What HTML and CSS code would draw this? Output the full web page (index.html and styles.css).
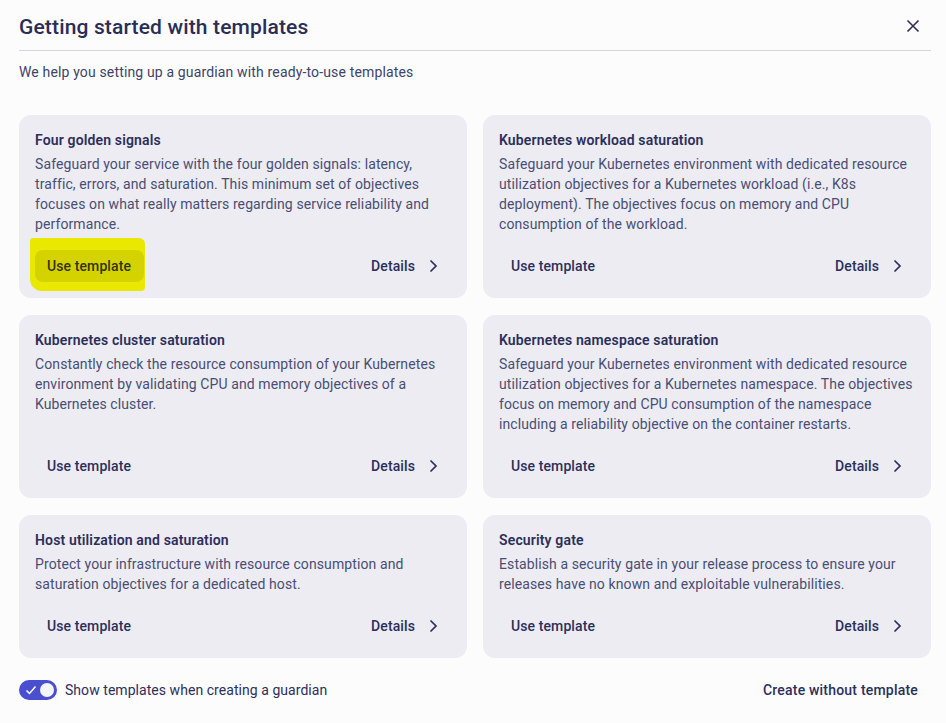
FILE: index.html
```html
<!DOCTYPE html>
<html lang="en">
<head>
<meta charset="utf-8">
<title>Getting started with templates</title>
<link rel="stylesheet" href="styles.css">
</head>
<body>
<div class="dialog">
  <header class="head">
    <h1 class="title">Getting started with templates</h1>
    <button class="close" aria-label="Close">
      <svg width="16" height="16" viewBox="0 0 16 16"><path d="M2.5 2.5 L13.5 13.5 M13.5 2.5 L2.5 13.5" stroke="#2c2f5a" stroke-width="1.6" fill="none"/></svg>
    </button>
  </header>
  <p class="intro">We help you setting up a guardian with ready-to-use templates</p>

  <div class="grid">
    <div class="card">
      <h2 class="card-title">Four golden signals</h2>
      <p class="card-desc">Safeguard your service with the four golden signals: latency, traffic, errors, and saturation. This minimum set of objectives focuses on what really matters regarding service reliability and performance.</p>
      <div class="actions">
        <div class="hl-wrap">
          <span class="marker"></span>
          <button class="btn use hl">Use template</button>
        </div>
        <button class="btn details">Details <svg class="chev" width="16" height="16" viewBox="0 0 16 16"><path d="M5.5 2.5 L11 8 L5.5 13.5" stroke="#2c2f5a" stroke-width="1.7" fill="none"/></svg></button>
      </div>
    </div>

    <div class="card">
      <h2 class="card-title">Kubernetes workload saturation</h2>
      <p class="card-desc">Safeguard your Kubernetes environment with dedicated resource utilization objectives for a Kubernetes workload (i.e., K8s deployment). The objectives focus on memory and CPU consumption of the workload.</p>
      <div class="actions">
        <button class="btn use">Use template</button>
        <button class="btn details">Details <svg class="chev" width="16" height="16" viewBox="0 0 16 16"><path d="M5.5 2.5 L11 8 L5.5 13.5" stroke="#2c2f5a" stroke-width="1.7" fill="none"/></svg></button>
      </div>
    </div>

    <div class="card">
      <h2 class="card-title">Kubernetes cluster saturation</h2>
      <p class="card-desc">Constantly check the resource consumption of your Kubernetes environment by validating CPU and memory objectives of a Kubernetes cluster.</p>
      <div class="actions">
        <button class="btn use">Use template</button>
        <button class="btn details">Details <svg class="chev" width="16" height="16" viewBox="0 0 16 16"><path d="M5.5 2.5 L11 8 L5.5 13.5" stroke="#2c2f5a" stroke-width="1.7" fill="none"/></svg></button>
      </div>
    </div>

    <div class="card">
      <h2 class="card-title">Kubernetes namespace saturation</h2>
      <p class="card-desc">Safeguard your Kubernetes environment with dedicated resource utilization objectives for a Kubernetes namespace. The objectives focus on memory and CPU consumption of the namespace including a reliability objective on the container restarts.</p>
      <div class="actions">
        <button class="btn use">Use template</button>
        <button class="btn details">Details <svg class="chev" width="16" height="16" viewBox="0 0 16 16"><path d="M5.5 2.5 L11 8 L5.5 13.5" stroke="#2c2f5a" stroke-width="1.7" fill="none"/></svg></button>
      </div>
    </div>

    <div class="card">
      <h2 class="card-title">Host utilization and saturation</h2>
      <p class="card-desc">Protect your infrastructure with resource consumption and saturation objectives for a dedicated host.</p>
      <div class="actions">
        <button class="btn use">Use template</button>
        <button class="btn details">Details <svg class="chev" width="16" height="16" viewBox="0 0 16 16"><path d="M5.5 2.5 L11 8 L5.5 13.5" stroke="#2c2f5a" stroke-width="1.7" fill="none"/></svg></button>
      </div>
    </div>

    <div class="card">
      <h2 class="card-title">Security gate</h2>
      <p class="card-desc">Establish a security gate in your release process to ensure your releases have no known and exploitable vulnerabilities.</p>
      <div class="actions">
        <button class="btn use">Use template</button>
        <button class="btn details">Details <svg class="chev" width="16" height="16" viewBox="0 0 16 16"><path d="M5.5 2.5 L11 8 L5.5 13.5" stroke="#2c2f5a" stroke-width="1.7" fill="none"/></svg></button>
      </div>
    </div>
  </div>

  <footer class="foot">
    <label class="toggle-row">
      <span class="toggle">
        <svg class="check" width="12" height="12" viewBox="0 0 12 12"><path d="M1.5 6.5 L4.5 9.5 L10.5 2.5" stroke="#fff" stroke-width="1.5" fill="none"/></svg>
        <span class="thumb"></span>
      </span>
      <span class="toggle-label">Show templates when creating a guardian</span>
    </label>
    <button class="btn create">Create without template</button>
  </footer>
</div>
</body>
</html>
```

FILE: styles.css
```css
* { box-sizing: border-box; }
html, body {
  margin: 0;
  padding: 0;
  background: #fcfcfd;
}
body {
  font-family: Roboto, "Liberation Sans", sans-serif;
  color: #2c2f5a;
}
.dialog {
  width: 946px;
  height: 723px;
  padding: 0 15px 0 19px;
}
.head {
  display: flex;
  align-items: center;
  justify-content: space-between;
  height: 51px;
  border-bottom: 1px solid #d4d4e4;
  padding-top: 3px;
}
.title {
  margin: 0;
  font-size: 21px;
  font-weight: 500;
  letter-spacing: 0.15px;
  color: #2a2d56;
}
.close {
  border: 0;
  background: none;
  padding: 0;
  width: 24px;
  height: 24px;
  display: flex;
  align-items: center;
  justify-content: center;
  margin-right: 6px;
  margin-bottom: 2px;
}
.intro {
  margin: 13px 0 0;
  font-size: 14px;
  line-height: 17px;
  color: #3f4368;
  letter-spacing: 0.15px;
}
.grid {
  margin-top: 34px;
  display: grid;
  grid-template-columns: 448px 448px;
  gap: 17px 16px;
}
.card {
  background: #ececf2;
  border-radius: 12px;
  padding: 16px;
  display: flex;
  flex-direction: column;
}
.card-title {
  margin: 0;
  font-size: 14px;
  font-weight: 600;
  line-height: 18px;
  letter-spacing: 0.15px;
  color: #2c2f5a;
}
.card-desc {
  margin: 5px 0 0;
  font-size: 14px;
  line-height: 20px;
  color: #4a4e74;
  letter-spacing: 0.1px;
}
.actions {
  margin-top: auto;
  padding-top: 16px;
  display: flex;
  justify-content: space-between;
  align-items: center;
}
.btn {
  font-family: inherit;
  font-size: 14px;
  font-weight: 500;
  color: #2c2f5a;
  background: transparent;
  border: 0;
  border-radius: 8px;
  height: 32px;
  padding: 0 12px;
  display: inline-flex;
  align-items: center;
  letter-spacing: 0.1px;
}
.details {
  gap: 10px;
  padding-right: 10px;
  margin-right: 0;
}
.hl-wrap {
  position: relative;
  display: inline-flex;
}
.marker {
  position: absolute;
  left: -5px;
  top: -12px;
  width: 115px;
  height: 53px;
  background: #e8e800;
  border-radius: 3px 6px 4px 12px;
}
.btn.hl {
  position: relative;
  background: #d4d300;
  color: #333300;
  width: 109px;
}
.foot {
  margin-top: 16px;
  display: flex;
  justify-content: space-between;
  align-items: center;
}
.toggle-row {
  display: flex;
  align-items: center;
  gap: 8px;
}
.toggle {
  width: 38px;
  height: 20px;
  border-radius: 10px;
  background: #4a4fd0;
  display: flex;
  align-items: center;
  justify-content: space-between;
  padding: 0 3px 0 6px;
}
.thumb {
  width: 14px;
  height: 14px;
  border-radius: 50%;
  background: #f4f4fb;
}
.toggle-label {
  font-size: 14px;
  color: #2c2f5a;
  letter-spacing: 0.05px;
}
.create {
  font-size: 14px;
  letter-spacing: 0.2px;
  margin-right: 1px;
}
```
